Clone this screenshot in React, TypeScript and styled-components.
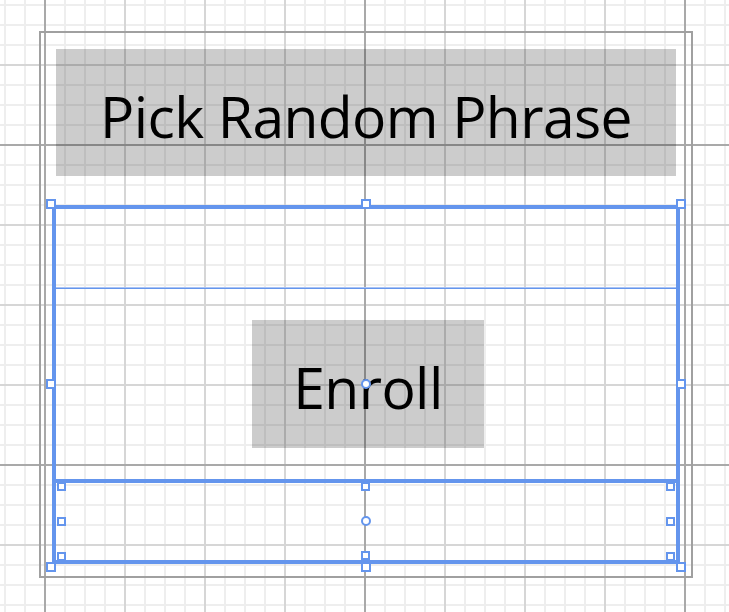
import React from "react";
import styled, { createGlobalStyle } from "styled-components";

const BLUE = "#6495ED";

const GlobalStyle = createGlobalStyle`
  html, body {
    margin: 0;
    padding: 0;
    width: 729px;
    height: 612px;
    overflow: hidden;
    background-color: #ffffff;
    font-family: "Open Sans", "Noto Sans", "Liberation Sans", sans-serif;
  }
`;

const Canvas = styled.div`
  width: 729px;
  height: 612px;
  box-sizing: border-box;
  padding: 31px 0 0 39px;
  background-color: #ffffff;
  background-image:
    linear-gradient(to right, #a9a9a9 2px, transparent 2px),
    linear-gradient(to bottom, #a9a9a9 2px, transparent 2px),
    linear-gradient(to right, #d6d6d6 2px, transparent 2px),
    linear-gradient(to bottom, #d6d6d6 2px, transparent 2px),
    linear-gradient(to right, #eeeeee 2px, transparent 2px),
    linear-gradient(to bottom, #eeeeee 2px, transparent 2px);
  background-size:
    320px 100%,
    100% 320px,
    80px 100%,
    100% 80px,
    20px 100%,
    100% 20px;
  background-position:
    44px 0,
    0 144px,
    44px 0,
    0 64px,
    4px 0,
    0 4px;
`;

const Frame = styled.div`
  width: 654px;
  height: 547px;
  box-sizing: border-box;
  border: 2px solid #a0a0a0;
  padding: 16px 15px 0 15px;
  display: flex;
  flex-direction: column;
  align-items: stretch;
`;

const GrayButton = styled.div<{ $w?: number; $h: number }>`
  width: ${(p) => (p.$w ? `${p.$w}px` : "auto")};
  height: ${(p) => p.$h}px;
  background: rgba(0, 0, 0, 0.2);
  display: flex;
  align-items: center;
  justify-content: center;
  color: #000;
  font-family: "Open Sans", "Noto Sans", sans-serif;
  font-size: 57px;
  line-height: 1;
  letter-spacing: -0.6px;
  padding-top: 7px;
  box-sizing: border-box;
`;

const Selection = styled.div`
  position: relative;
  margin: 29px -4px 0 -4px;
  border: 4px solid ${BLUE};
  display: flex;
  flex-direction: column;
`;

const TopRow = styled.div`
  height: 78px;
`;

const Divider = styled.div`
  height: 0;
  border-top: 1px solid #a9c3f4;
  border-bottom: 1px solid ${BLUE};
`;

const MiddleRow = styled.div`
  height: 190px;
  display: flex;
  align-items: center;
  justify-content: center;
  padding-left: 4px;
`;

const BottomRow = styled.div`
  height: 77px;
  border-top: 4px solid ${BLUE};
`;

const Handle = styled.div<{ $x: number; $y: number; $s: number }>`
  position: absolute;
  left: ${(p) => p.$x}px;
  top: ${(p) => p.$y}px;
  width: ${(p) => p.$s}px;
  height: ${(p) => p.$s}px;
  box-sizing: border-box;
  border: 2px solid ${BLUE};
  background: #ffffff;
`;

const CenterDot = styled(Handle)`
  border-radius: 50%;
`;

const bigHandles = [
  [-10, -10],
  [305, -10],
  [620, -10],
  [-10, 170],
  [620, 170],
  [-10, 353],
  [305, 353],
  [620, 353],
];

const smallHandles = [
  [1, 273],
  [1, 308],
  [1, 343],
  [305, 273],
  [305, 342],
  [610, 273],
  [610, 308],
  [610, 343],
];

export default function App() {
  return (
    <>
      <GlobalStyle />
      <Canvas>
        <Frame>
          <GrayButton $h={127}>Pick Random Phrase</GrayButton>
          <Selection>
            <TopRow />
            <Divider />
            <MiddleRow>
              <GrayButton $w={232} $h={128}>
                Enroll
              </GrayButton>
            </MiddleRow>
            <BottomRow />
            {bigHandles.map(([x, y], i) => (
              <Handle key={`b${i}`} $x={x} $y={y} $s={10} />
            ))}
            {smallHandles.map(([x, y], i) => (
              <Handle key={`s${i}`} $x={x} $y={y} $s={9} />
            ))}
            <CenterDot $x={305} $y={170} $s={10} />
            <CenterDot $x={305} $y={307} $s={10} />
          </Selection>
        </Frame>
      </Canvas>
    </>
  );
}
